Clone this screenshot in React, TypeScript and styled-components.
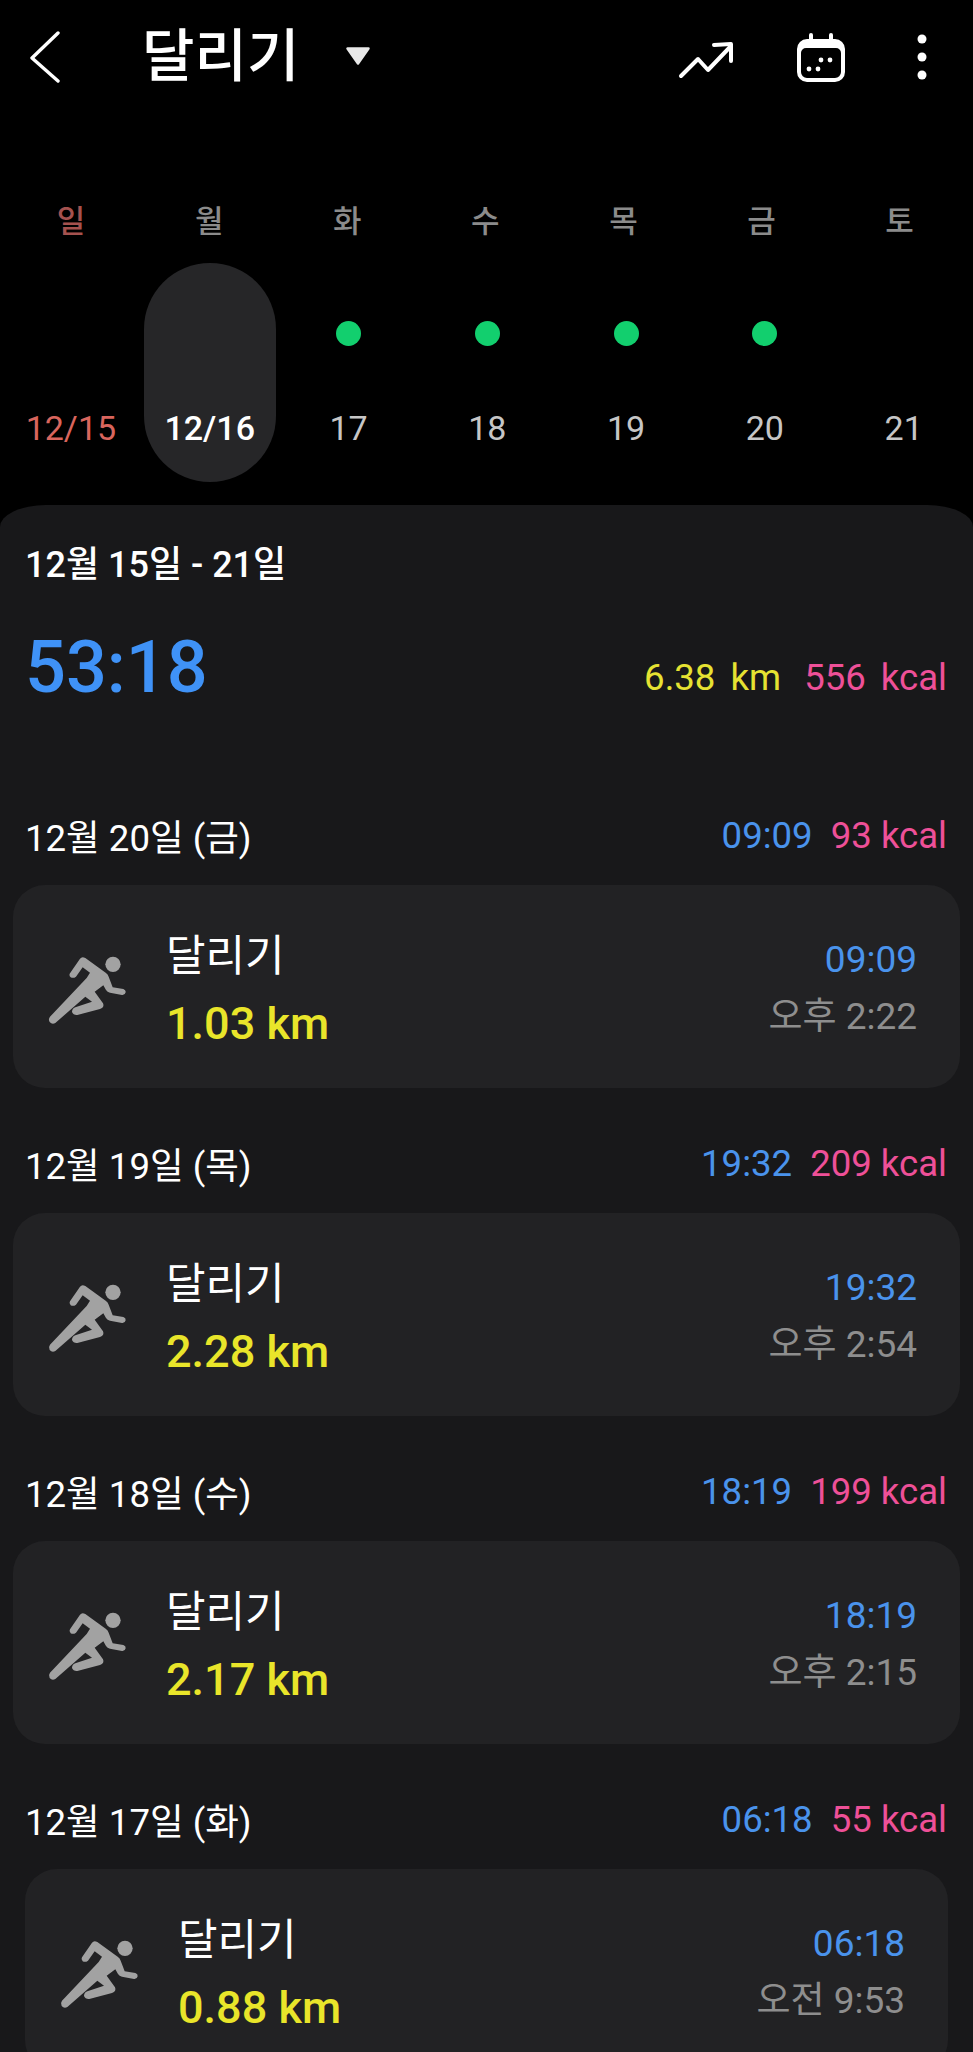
import React from 'react'
import styled, { createGlobalStyle } from 'styled-components';

const GlobalStyle = createGlobalStyle`
  html, body {
    margin: 0;
    padding: 0;
    background-color: #000;
  }
  body {
    font-family: Roboto, "Noto Sans CJK KR", sans-serif;
    color: #fff;
  }
`

const Page = styled.div`
  width: 973px;
  height: 2052px;
  overflow: hidden;
  background-color: #000;
  display: flex;
  flex-direction: column;
`

const Header = styled.header`
  height: 114px;
  flex-shrink: 0;
  display: flex;
  align-items: center;
  padding: 0 46px 0 30px;
`

const BackIcon = styled.svg`
  width: 30px;
  height: 52px;
  margin-right: 82px;
`

const Title = styled.h1`
  margin: 0;
  font-size: 57px;
  line-height: 60px;
  font-weight: 500;
  color: #fff;
`

const Caret = styled.svg`
  width: 26px;
  height: 20px;
  margin: -3px 0 0 46px;
`

const Actions = styled.div`
  margin-left: auto;
  display: flex;
  align-items: center;
`

const TrendIcon = styled.svg`
  width: 60px;
  height: 44px;
  margin-right: 58px;
`

const CalendarIcon = styled.svg`
  width: 50px;
  height: 52px;
  margin-right: 71px;
`

const MoreIcon = styled.svg`
  width: 10px;
  height: 46px;
`

const WeekLabels = styled.div`
  flex-shrink: 0;
  display: grid;
  grid-template-columns: repeat(7, 138.1px);
  padding: 88px 0 0 2px;
`

const WeekCells = styled.div`
  flex-shrink: 0;
  display: grid;
  grid-template-columns: repeat(7, 138.8px);
  padding: 21px 0 0 1.5px;
`

const WeekDay = styled.div<{ $sunday?: boolean }>`
  height: 40px;
  line-height: 40px;
  font-size: 31px;
  font-weight: 500;
  text-align: center;
  color: ${p => p.$sunday ? '#a5524f' : '#8b8b8b'};
`

const DayCell = styled.div<{ $selected?: boolean }>`
  width: 132px;
  height: 219px;
  justify-self: center;
  padding-top: 58px;
  box-sizing: border-box;
  border-radius: 66px;
  background-color: ${p => p.$selected ? '#262628' : 'transparent'};
  display: flex;
  flex-direction: column;
  align-items: center;
`

const DotSlot = styled.div`
  height: 25px;
  flex-shrink: 0;
`

const Dot = styled.div`
  width: 25px;
  height: 25px;
  border-radius: 50%;
  background-color: #12cf6e;
`

const DayNumber = styled.div<{ $tone?: 'sunday' | 'selected' }>`
  margin-top: 62px;
  height: 40px;
  line-height: 40px;
  font-size: 34px;
  font-weight: ${p => p.$tone === 'selected' ? 500 : 400};
  color: ${p => p.$tone === 'sunday' ? '#d9655d' : p.$tone === 'selected' ? '#fff' : '#c6c6c6'};
`

const Panel = styled.main`
  flex: 1 0 auto;
  margin-top: 23px;
  padding: 40px 13px 0;
  background-color: #18181a;
  border-radius: 46px 46px 0 0 / 22px 22px 0 0;
`

const RangeTitle = styled.div`
  padding-left: 12px;
  height: 40px;
  line-height: 40px;
  font-size: 36px;
  font-weight: 500;
`

const Summary = styled.div`
  margin-top: 43px;
  padding: 0 13px 0 12px;
  height: 80px;
  display: flex;
  align-items: flex-end;
  justify-content: space-between;
`

const TotalTime = styled.div`
  font-size: 72px;
  line-height: 80px;
  font-weight: 500;
  color: #3f92f7;
`

const SummaryStats = styled.div`
  display: flex;
  gap: 23px;
  margin-bottom: 10px;
`

const Stat = styled.span<{ $color: string; $wide?: boolean }>`
  font-size: 36.6px;
  line-height: 40px;
  color: ${p => p.$color};
  word-spacing: ${p => p.$wide ? '6px' : '0'};
`

const DayList = styled.div`
  margin-top: 107px;
  display: flex;
  flex-direction: column;
  gap: 55px;
`

const DayHeader = styled.div`
  height: 40px;
  padding: 0 13px 0 12px;
  margin-bottom: 30px;
  display: flex;
  align-items: center;
  justify-content: space-between;
  font-size: 36.6px;
`

const DayTotals = styled.div`
  display: flex;
  gap: 18px;
  margin-top: 1px;
`

const Card = styled.div<{ $inset?: boolean }>`
  height: 203px;
  margin: 0 ${p => p.$inset ? '12px' : '0'};
  padding: 0 43px 0 31px;
  background-color: #222224;
  border-radius: 32px;
  display: flex;
  align-items: center;
`

const RunnerIcon = styled.svg`
  width: 90px;
  height: 80px;
  flex-shrink: 0;
  margin: 7px 32px 0 0;
`

const CardMain = styled.div`
  flex: 1;
  display: flex;
  flex-direction: column;
  gap: 18px;
  margin-top: 6px;
`

const CardTitle = styled.div`
  font-size: 43px;
  line-height: 50px;
  color: #fff;
`

const CardDistance = styled.div`
  font-size: 45px;
  line-height: 50px;
  font-weight: 500;
  color: #e9e52a;
`

const CardSide = styled.div`
  display: flex;
  flex-direction: column;
  align-items: flex-end;
  gap: 17px;
  margin-top: 3px;
  font-size: 37px;
  line-height: 40px;
`

const CardTime = styled.div`
  color: #4a93ec;
`

const CardStart = styled.div`
  color: #8e8e8e;
`

const week = [
  { day: '일', num: '12/15', tone: 'sunday' as const },
  { day: '월', num: '12/16', tone: 'selected' as const },
  { day: '화', num: '17', dot: true },
  { day: '수', num: '18', dot: true },
  { day: '목', num: '19', dot: true },
  { day: '금', num: '20', dot: true },
  { day: '토', num: '21' },
];

const days = [
  { date: '12월 20일 (금)', time: '09:09', kcal: '93 kcal', km: '1.03 km', start: '오후 2:22' },
  { date: '12월 19일 (목)', time: '19:32', kcal: '209 kcal', km: '2.28 km', start: '오후 2:54' },
  { date: '12월 18일 (수)', time: '18:19', kcal: '199 kcal', km: '2.17 km', start: '오후 2:15' },
  { date: '12월 17일 (화)', time: '06:18', kcal: '55 kcal', km: '0.88 km', start: '오전 9:53', inset: true },
];

function Runner() {
  return (
    <RunnerIcon viewBox="0 0 270 240" fill="#a2a2a2">
      <circle cx="207" cy="43" r="23" />
      <path d="M78 70L108 26Q114 18 124 24L185 68Q192 72 194 80L206 112L238 117Q246 120 245 127Q243 136 234 135L198 128Q190 126 186 120L178 106L152 125L177 160Q182 172 168 177L100 195Q88 196 84 186Q84 176 94 172L144 155L124 140L34 219Q24 224 17 216Q12 208 18 200L128 84L138 68L116 52L96 80Q88 86 80 82Q74 76 78 70Z" />
    </RunnerIcon>
  )
}

function App() {
  return (
    <Page>
      <GlobalStyle />
      <Header>
        <BackIcon viewBox="0 0 30 52" fill="none" stroke="#fff" strokeWidth="3.4" strokeLinecap="round" strokeLinejoin="round">
          <path d="M28 2L2 27L28 50" />
        </BackIcon>
        <Title>달리기</Title>
        <Caret viewBox="0 0 26 20" fill="#e8e8e8" stroke="#e8e8e8" strokeWidth="2.5" strokeLinejoin="round">
          <path d="M2.5 2.5H23.5L13 17.5Z" />
        </Caret>
        <Actions>
          <TrendIcon viewBox="0 0 60 44" fill="none" stroke="#fff" strokeWidth="4" strokeLinecap="round" strokeLinejoin="round">
            <path d="M3 41L20 24L30 35L52 12" />
            <path d="M36 10L53 9L53 26" />
          </TrendIcon>
          <CalendarIcon viewBox="0 0 50 52">
            <path fill="#fff" fillRule="evenodd" d="M11 8h28a10 10 0 0 1 10 10v23a10 10 0 0 1-10 10H11a10 10 0 0 1-10-10V18A10 10 0 0 1 11 8ZM10 17a5 5 0 0 0-5 5v19a6 6 0 0 0 6 6h28a6 6 0 0 0 6-6V22a5 5 0 0 0-5-5Z" />
            <rect x="13" y="2" width="4" height="8" rx="2" fill="#fff" />
            <rect x="33" y="2" width="4" height="8" rx="2" fill="#fff" />
            <circle cx="13" cy="38" r="2.4" fill="#fff" />
            <circle cx="22" cy="38" r="2.4" fill="#fff" />
            <circle cx="25" cy="29" r="2.4" fill="#fff" />
            <circle cx="34" cy="29" r="2.4" fill="#fff" />
          </CalendarIcon>
          <MoreIcon viewBox="0 0 10 46" fill="#fff">
            <circle cx="5" cy="5" r="4.5" />
            <circle cx="5" cy="23" r="4.5" />
            <circle cx="5" cy="41" r="4.5" />
          </MoreIcon>
        </Actions>
      </Header>

      <WeekLabels>
        {week.map(item => (
          <WeekDay key={item.day} $sunday={item.tone === 'sunday'}>{item.day}</WeekDay>
        ))}
      </WeekLabels>
      <WeekCells>
        {week.map(item => (
          <DayCell key={item.num} $selected={item.tone === 'selected'}>
            <DotSlot>{item.dot && <Dot />}</DotSlot>
            <DayNumber $tone={item.tone}>{item.num}</DayNumber>
          </DayCell>
        ))}
      </WeekCells>

      <Panel>
        <RangeTitle>12월 15일 - 21일</RangeTitle>
        <Summary>
          <TotalTime>53:18</TotalTime>
          <SummaryStats>
            <Stat $wide $color="#e6e232">6.38 km</Stat>
            <Stat $wide $color="#ee5098">556 kcal</Stat>
          </SummaryStats>
        </Summary>
        <DayList>
          {days.map(item => (
            <div key={item.date}>
              <DayHeader>
                <span>{item.date}</span>
                <DayTotals>
                  <Stat $color="#4a93ec">{item.time}</Stat>
                  <Stat $color="#ee5098">{item.kcal}</Stat>
                </DayTotals>
              </DayHeader>
              <Card $inset={item.inset}>
                <Runner />
                <CardMain>
                  <CardTitle>달리기</CardTitle>
                  <CardDistance>{item.km}</CardDistance>
                </CardMain>
                <CardSide>
                  <CardTime>{item.time}</CardTime>
                  <CardStart>{item.start}</CardStart>
                </CardSide>
              </Card>
            </div>
          ))}
        </DayList>
      </Panel>
    </Page>
  )
}

export default App;
